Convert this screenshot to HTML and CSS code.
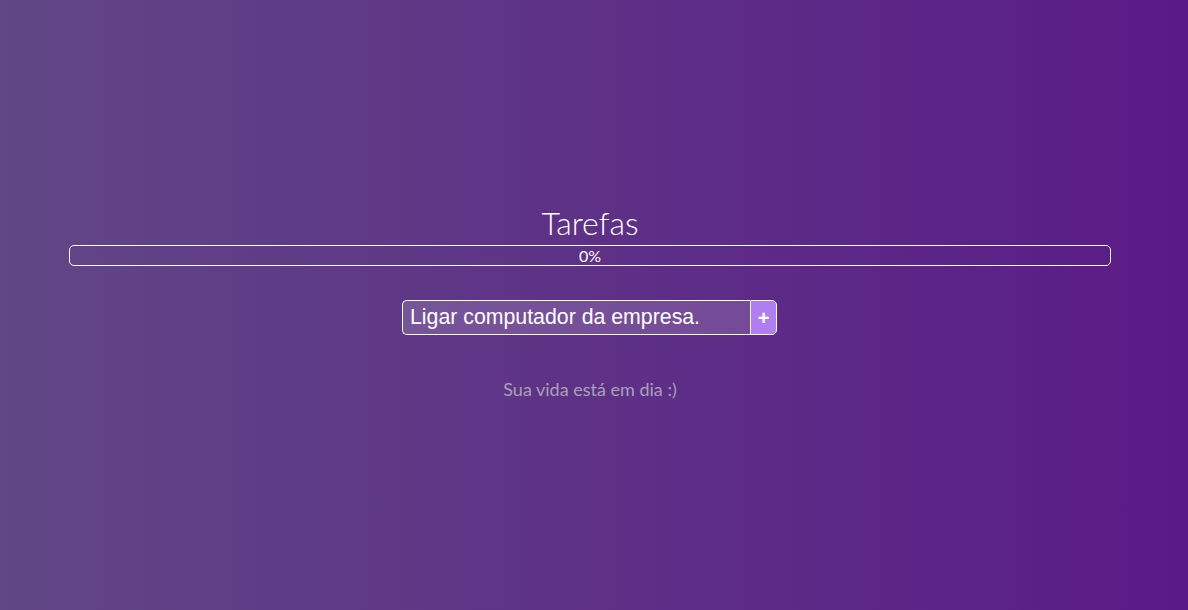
FILE: index.html
```html
<!DOCTYPE html>
<html lang="pt-BR">
<head>
<meta charset="utf-8">
<title>Tarefas</title>
<link rel="stylesheet" href="styles.css">
</head>
<body>
<main class="app">
  <h1 class="title">Tarefas</h1>
  <div class="progress"><span class="progress-label">0%</span></div>
  <form class="new-task">
    <input class="new-task-input" type="text" value="Ligar computador da empresa." autofocus>
    <button class="new-task-btn" type="button">+</button>
  </form>
  <p class="empty">Sua vida está em dia :)</p>
</main>
</body>
</html>
```
FILE: styles.css
```css
html, body {
  margin: 0;
  height: 100%;
}
body {
  background: linear-gradient(to right, #614786, #5a1b87);
  font-family: Lato, "Noto Sans", sans-serif;
  color: #fff;
}
.app {
  display: flex;
  flex-direction: column;
  align-items: center;
  padding: 203px 77px 0 69px;
}
.title {
  margin: 0;
  font-weight: 300;
  font-size: 32px;
  line-height: 40px;
  color: #fff;
}
.progress {
  box-sizing: border-box;
  align-self: stretch;
  height: 21px;
  margin-top: 2px;
  border: 1px solid #fff;
  border-radius: 5px;
  display: flex;
  align-items: center;
  justify-content: center;
}
.progress-label {
  font-size: 16px;
  font-weight: 400;
  line-height: 19px;
}
.new-task {
  display: flex;
  margin: 34px 1px 0 0;
}
.new-task-input {
  box-sizing: border-box;
  width: 348px;
  height: 35px;
  margin: 0;
  padding: 0 7px;
  border: 1px solid #fff;
  border-right: none;
  border-radius: 5px 0 0 5px;
  background: rgba(255, 255, 255, 0.15);
  color: #fff;
  font-family: "Liberation Sans", Arial, sans-serif;
  font-size: 21.3px;
  outline: none;
  caret-color: #fff;
}
.new-task-btn {
  box-sizing: border-box;
  width: 27px;
  height: 35px;
  margin: 0;
  padding: 0;
  border: 1px solid #fff;
  border-radius: 0 5px 5px 0;
  background: #b07ef0;
  color: #fff;
  font-family: "Liberation Sans", Arial, sans-serif;
  font-size: 20px;
  font-weight: 700;
  line-height: 1;
}
.empty {
  margin: 43px 0 0;
  font-size: 18px;
  color: #a9a1b6;
}
```
